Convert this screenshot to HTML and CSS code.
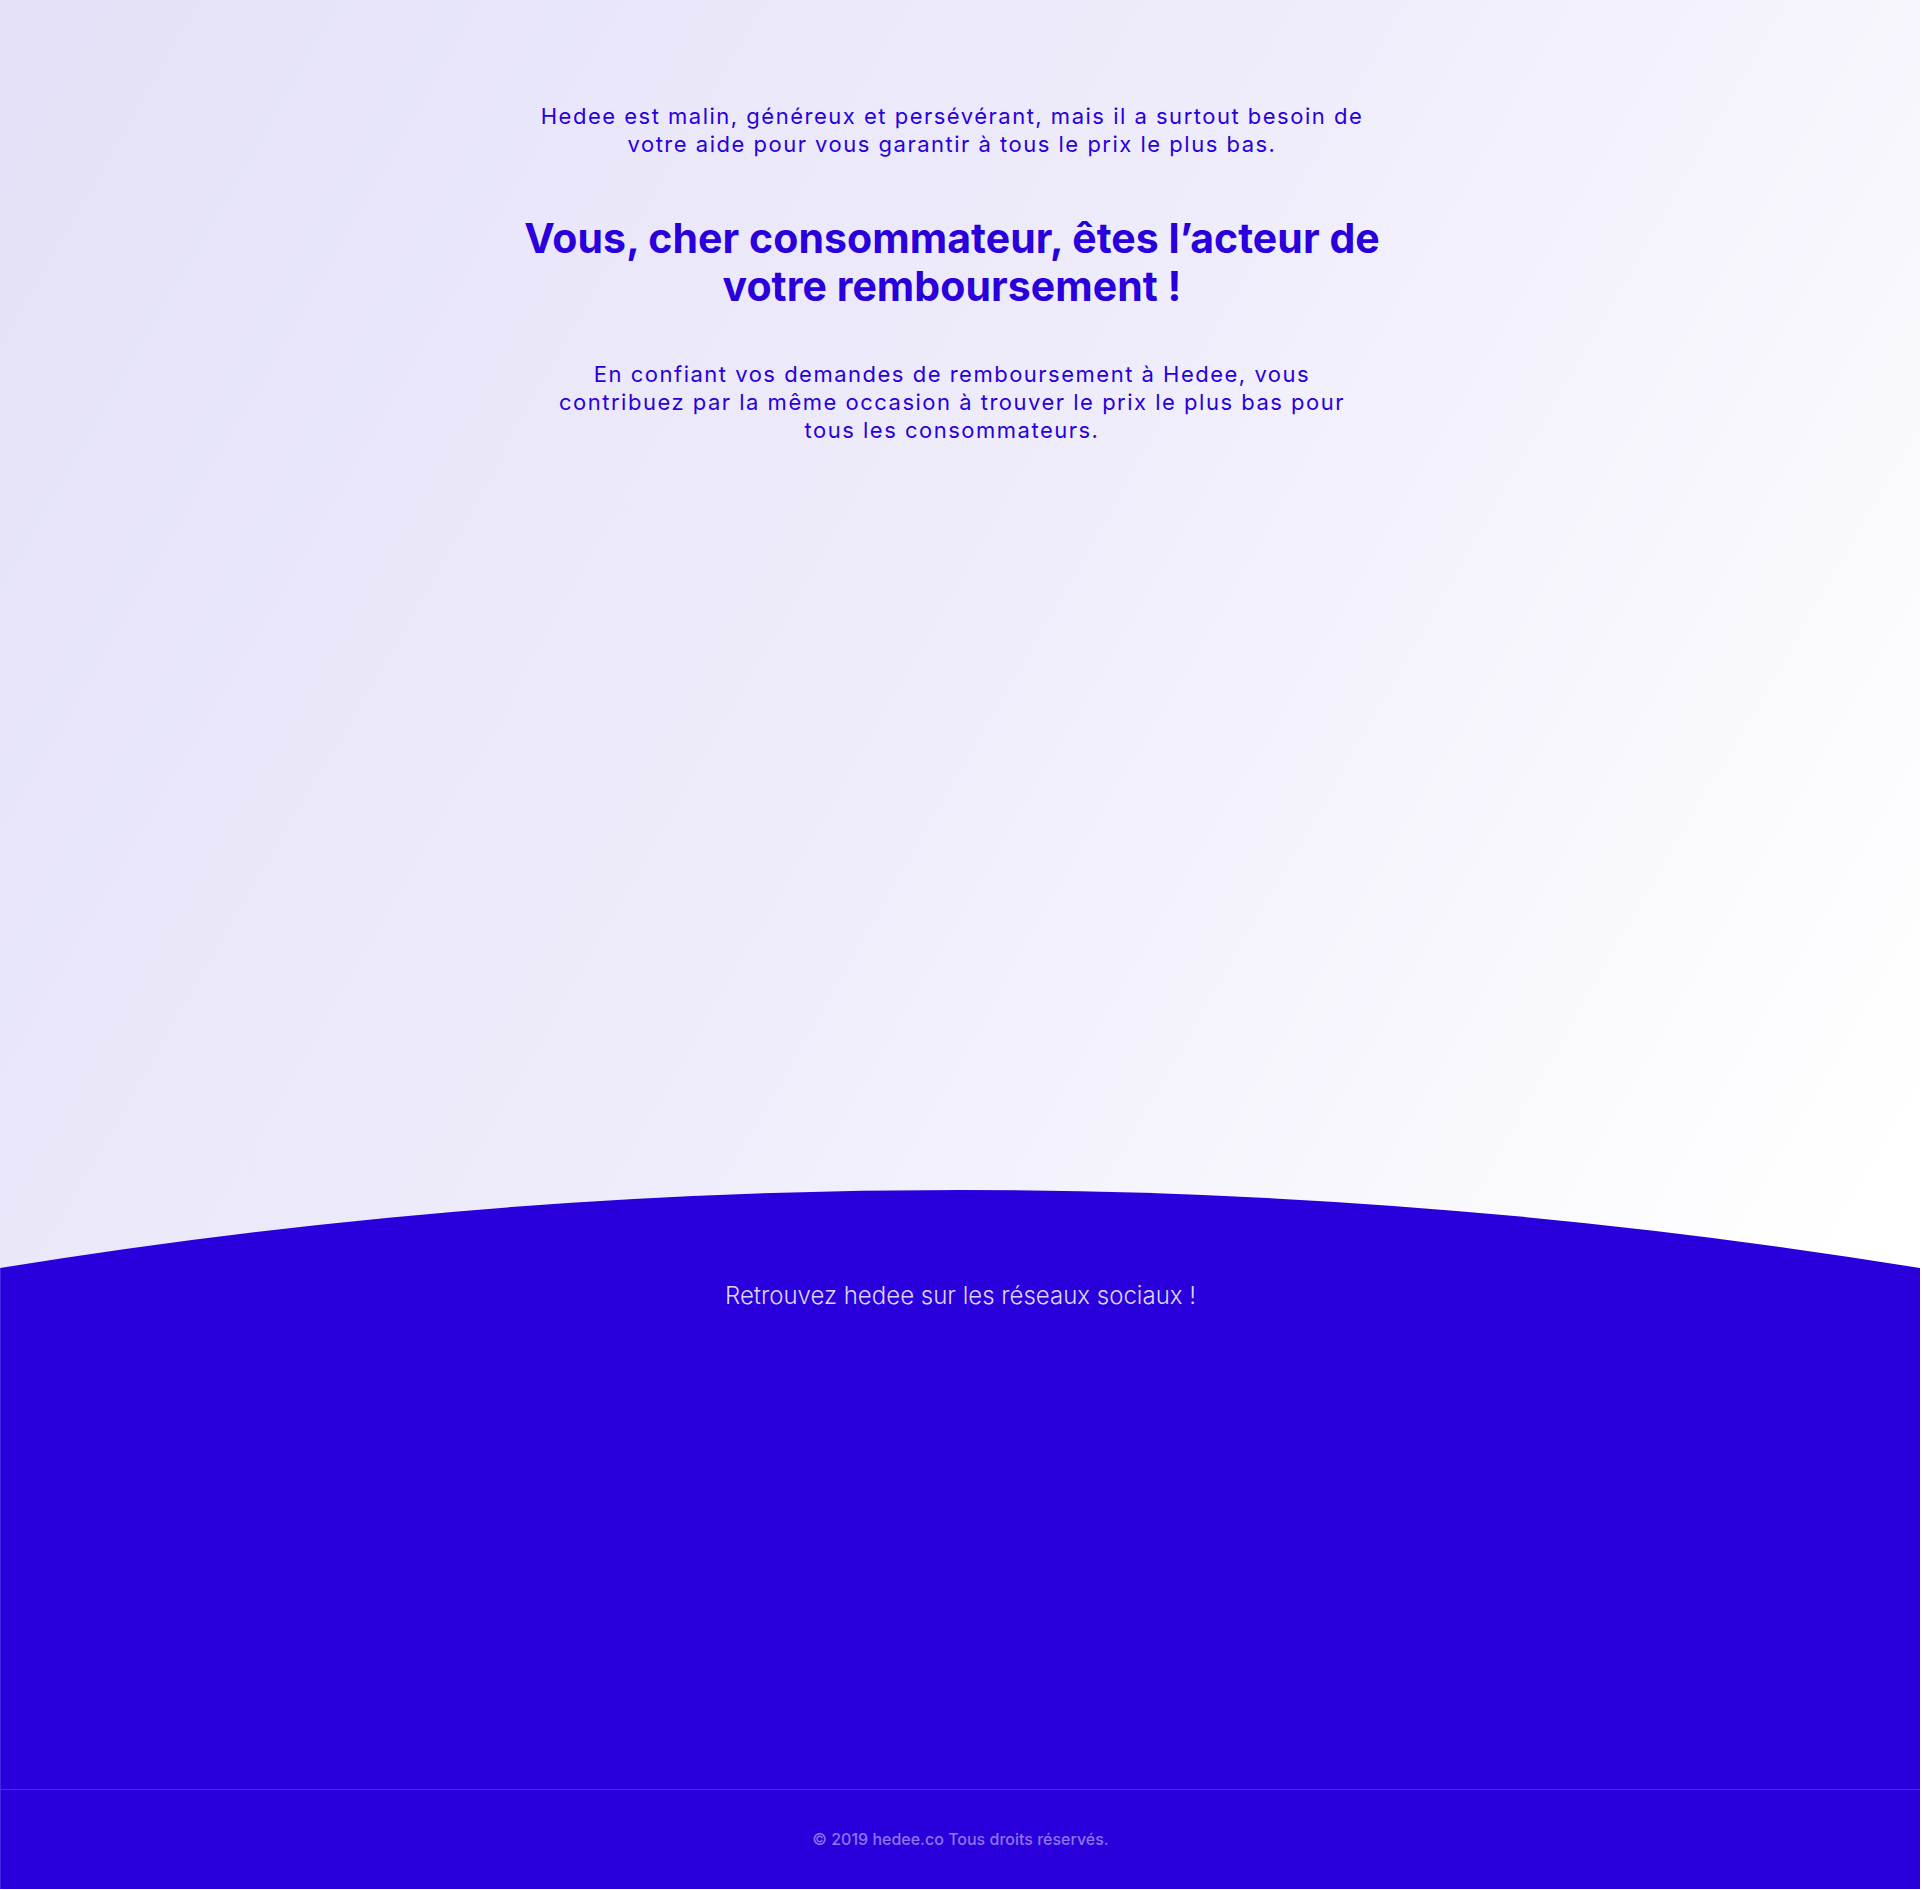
FILE: index.html
```html
<!DOCTYPE html>
<html lang="fr">
<head>
<meta charset="utf-8">
<title>Hedee</title>
<link rel="stylesheet" href="styles.css">
</head>
<body>
<div class="page">
  <main class="hero">
    <div class="hero-inner">
      <p class="lead">Hedee est malin, généreux et persévérant, mais il a surtout besoin de votre aide pour vous garantir à tous le prix le plus bas.</p>
      <h1 class="title">Vous, cher consommateur, êtes l’acteur de votre remboursement !</h1>
      <p class="text">En confiant vos demandes de remboursement à Hedee, vous contribuez par la même occasion à trouver le prix le plus bas pour tous les consommateurs.</p>
    </div>
  </main>
  <footer class="footer">
    <svg class="wave" viewBox="0 0 1920 78" preserveAspectRatio="none" width="1920" height="78">
      <path d="M0 78 Q960 -78 1920 78 Z" fill="#2900dc"/>
    </svg>
    <div class="footer-body">
      <p class="social">Retrouvez hedee sur les réseaux sociaux !</p>
    </div>
    <div class="footer-bottom">
      <p class="copy">© 2019 hedee.co Tous droits réservés.</p>
    </div>
  </footer>
</div>
</body>
</html>
```
FILE: styles.css
```css
html, body {
  margin: 0;
  padding: 0;
  background: #ffffff;
}
body {
  font-family: Inter, "Open Sans", "Liberation Sans", sans-serif;
}
.page {
  width: 1920px;
  background: linear-gradient(120deg, #e4e1f8 0%, #efedfb 45%, #ffffff 85%);
}
.hero {
  height: 1190px;
}
.hero-inner {
  width: 900px;
  margin: 0 auto;
  padding-top: 102px;
  text-align: center;
  color: #2900dc;
  position: relative;
  left: -8px;
}
.lead {
  width: 850px;
  margin: 0 auto;
  font-size: 22px;
  line-height: 28px;
  letter-spacing: 1.5px;
}
.title {
  width: 880px;
  margin: 56px auto 0;
  font-size: 41px;
  line-height: 48px;
  font-weight: 700;
  letter-spacing: 0.05px;
}
.text {
  width: 810px;
  margin: 50px auto 0;
  font-size: 22px;
  line-height: 28px;
  letter-spacing: 1.5px;
}
.footer {
  display: flex;
  flex-direction: column;
}
.wave {
  display: block;
  width: 1920px;
  height: 78px;
}
.footer-body {
  background: #2900dc;
  height: 522px;
  padding-top: 12px;
  box-sizing: border-box;
  border-left: 1px solid #4225e2;
  border-bottom: 1px solid #4a2fe2;
}
.social {
  margin: 0;
  text-align: center;
  color: #ddd6fb;
  font-size: 24px;
  line-height: 32px;
  font-weight: 300;
}
.footer-bottom {
  background: #2900dc;
  height: 99px;
  padding-top: 39px;
  box-sizing: border-box;
  border-left: 1px solid #4225e2;
}
.copy {
  margin: 0;
  text-align: center;
  color: #8e74ef;
  font-size: 16px;
  line-height: 20px;
  font-weight: 500;
}
```
